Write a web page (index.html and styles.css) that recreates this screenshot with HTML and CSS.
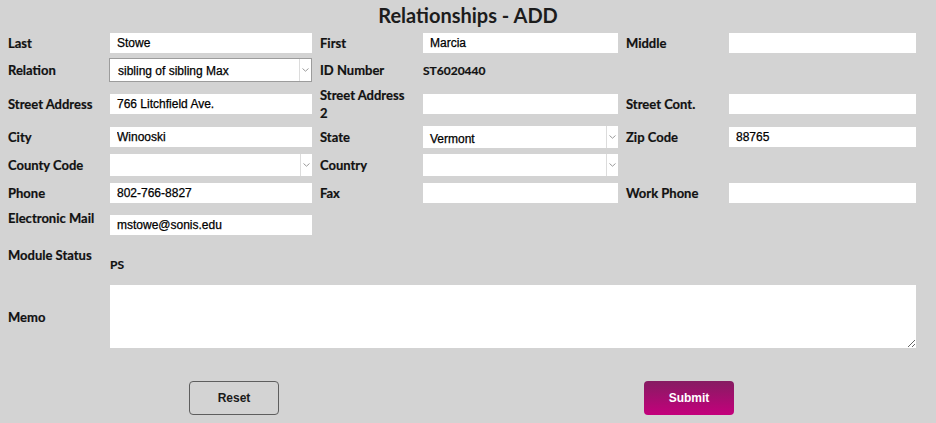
FILE: index.html
```html
<!DOCTYPE html>
<html>
<head>
<meta charset="utf-8">
<link rel="stylesheet" href="styles.css">
</head>
<body>
<h1 class="title">Relationships - ADD</h1>
<form class="form">
  <label class="lbl">Last</label>
  <input class="inp w1" type="text" value="Stowe">
  <label class="lbl">First</label>
  <input class="inp w2" type="text" value="Marcia">
  <label class="lbl">Middle</label>
  <input class="inp w3" type="text" value="">

  <label class="lbl">Relation</label>
  <div class="sel sel-bordered w1"><span class="sel-text">sibling of sibling Max</span><span class="sel-arrow"><svg width="7" height="4" viewBox="0 0 7 4"><path d="M0.5 0.5 L3.5 3.2 L6.5 0.5" fill="none" stroke="#9a9a9a" stroke-width="1"/></svg></span></div>
  <label class="lbl">ID Number</label>
  <span class="val">ST6020440</span>
  <span></span>
  <span></span>

  <label class="lbl">Street Address</label>
  <input class="inp w1" type="text" value="766 Litchfield Ave.">
  <label class="lbl narrow">Street Address 2</label>
  <input class="inp w2" type="text" value="">
  <label class="lbl">Street Cont.</label>
  <input class="inp w3" type="text" value="">

  <label class="lbl">City</label>
  <input class="inp w1" type="text" value="Winooski">
  <label class="lbl">State</label>
  <div class="sel w2 tall"><span class="sel-text">Vermont</span><span class="sel-arrow"><svg width="7" height="4" viewBox="0 0 7 4"><path d="M0.5 0.5 L3.5 3.2 L6.5 0.5" fill="none" stroke="#9a9a9a" stroke-width="1"/></svg></span></div>
  <label class="lbl">Zip Code</label>
  <input class="inp w3" type="text" value="88765">

  <label class="lbl">County Code</label>
  <div class="sel w1 tall"><span class="sel-text"></span><span class="sel-arrow"><svg width="7" height="4" viewBox="0 0 7 4"><path d="M0.5 0.5 L3.5 3.2 L6.5 0.5" fill="none" stroke="#9a9a9a" stroke-width="1"/></svg></span></div>
  <label class="lbl">Country</label>
  <div class="sel w2 tall"><span class="sel-text"></span><span class="sel-arrow"><svg width="7" height="4" viewBox="0 0 7 4"><path d="M0.5 0.5 L3.5 3.2 L6.5 0.5" fill="none" stroke="#9a9a9a" stroke-width="1"/></svg></span></div>
  <span></span>
  <span></span>

  <label class="lbl">Phone</label>
  <input class="inp w1" type="text" value="802-766-8827">
  <label class="lbl">Fax</label>
  <input class="inp w2" type="text" value="">
  <label class="lbl">Work Phone</label>
  <input class="inp w3" type="text" value="">

  <label class="lbl top">Electronic Mail</label>
  <input class="inp w1 email" type="text" value="mstowe@sonis.edu">
  <span class="rest-7"></span>

  <label class="lbl status">Module Status</label>
  <span class="val ps">PS</span>
  <span class="rest-8"></span>

  <label class="lbl">Memo</label>
  <textarea class="memo"></textarea>

  <div class="actions">
    <button type="button" class="btn btn-reset">Reset</button>
    <button type="button" class="btn btn-submit">Submit</button>
  </div>
</form>
</body>
</html>
```
FILE: styles.css
```css
* { box-sizing: border-box; }
html, body {
  margin: 0;
  padding: 0;
  background: #d3d3d3;
}
body {
  width: 936px;
  height: 423px;
  overflow: hidden;
  font-family: Lato, "Liberation Sans", sans-serif;
  color: #151515;
}
.title {
  margin: 0;
  height: 31px;
  padding-top: 3px;
  text-align: center;
  font-size: 20px;
  line-height: 24px;
  font-weight: 700;
  color: #1c1c1c;
}
.form {
  display: grid;
  grid-template-columns: 102px 210px 103px 203px 103px 187px;
  grid-template-rows: 24px 30px 37px 30px 26px 29px 33px 45px 63px auto;
  align-items: center;
  padding-left: 8px;
}
.lbl {
  font-size: 13px;
  font-weight: 700;
  line-height: 18px;
  color: #111;
  padding-right: 4px;
  -webkit-text-stroke: 0.2px #111;
}
.lbl.narrow { max-width: 96px; }
.lbl.top { align-self: start; margin-top: 2px; }
.lbl.status { align-self: start; margin-top: 6px; }
.val {
  font-size: 12px;
  font-weight: 700;
  color: #111;
  -webkit-text-stroke: 0.2px #111;
}
.val.ps { align-self: start; margin-top: 17px; }
.rest-7 { grid-column: 3 / 7; }
.rest-8 { grid-column: 3 / 7; }
.inp {
  height: 20px;
  border: none;
  background: #fff;
  padding: 0 7px;
  font-family: "Liberation Sans", Arial, sans-serif;
  font-size: 12px;
  color: #000;
  outline: none;
  -webkit-text-stroke: 0.25px #000;
}
.inp.email { align-self: start; margin-top: 8px; }
.w1 { width: 202px; }
.w2 { width: 195px; }
.w3 { width: 187px; }
.sel {
  display: flex;
  align-items: center;
  height: 22px;
  background: #fff;
}
.sel.tall { height: 22px; }
.sel-bordered {
  height: 24px;
  width: 203px;
  margin-left: -1px;
  border: 1px solid #9c9c9c;
}
.sel-text {
  flex: 1;
  padding-left: 8px;
  padding-top: 2px;
  font-family: "Liberation Sans", Arial, sans-serif;
  font-size: 12px;
  color: #000;
  -webkit-text-stroke: 0.25px #000;
}
.sel.tall .sel-text { padding-left: 7px; padding-top: 3px; }
.sel-arrow {
  width: 12px;
  height: 100%;
  border-left: 1px solid #dcdcdc;
  display: flex;
  align-items: center;
  justify-content: center;
}
.memo {
  grid-column: 2 / 7;
  width: 806px;
  height: 63px;
  border: none;
  background: #fff;
  resize: both;
  outline: none;
  padding: 2px 4px;
}
.actions {
  grid-column: 1 / 7;
  display: flex;
  gap: 365px;
  padding-left: 181px;
  margin-top: 33px;
}
.btn {
  width: 90px;
  height: 34px;
  border-radius: 4px;
  font-family: "Liberation Sans", Arial, sans-serif;
  font-size: 12px;
  font-weight: 700;
  cursor: pointer;
}
.btn-reset {
  background: transparent;
  border: 1px solid #5e5e5e;
  color: #1a1a1a;
}
.btn-submit {
  background: linear-gradient(to bottom, #861c62, #c4007c);
  border: none;
  color: #fff;
}
```
